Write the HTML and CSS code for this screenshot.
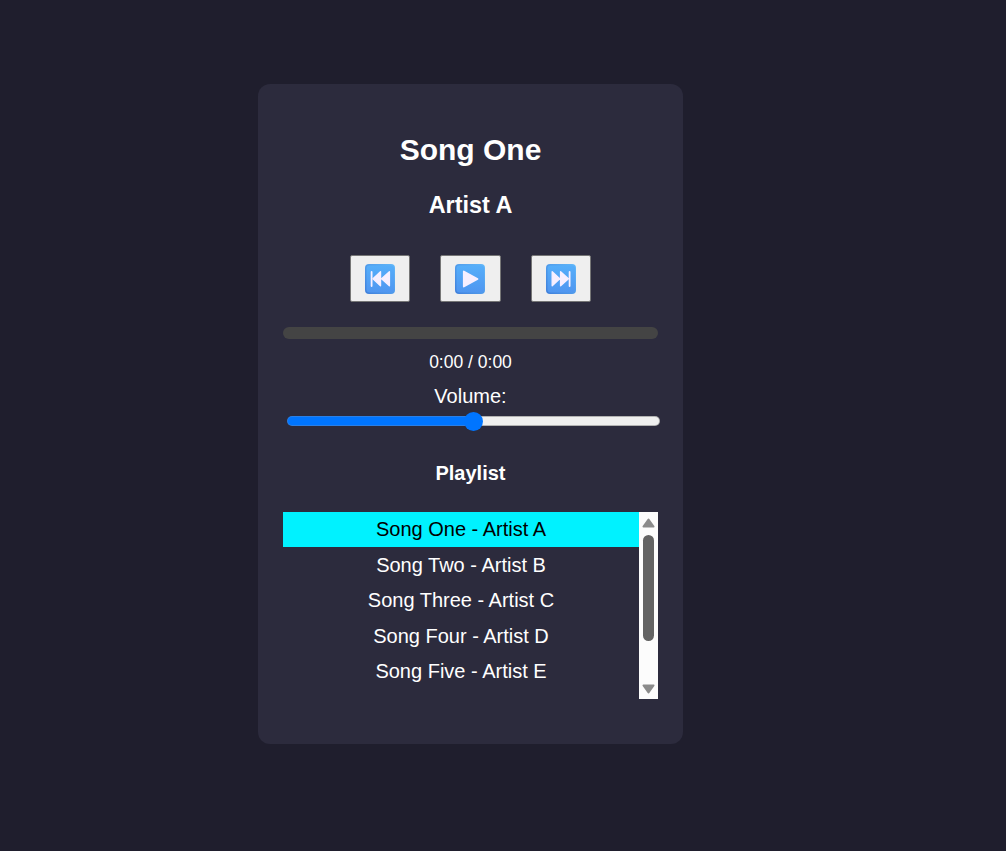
FILE: index.html
```html
<!DOCTYPE html>
<html lang="en">
<head>
<meta charset="utf-8">
<title>Music Player</title>
<link rel="stylesheet" href="styles.css">
</head>
<body>
<svg class="defs" width="0" height="0">
  <defs>
    <linearGradient id="face" x1="0" y1="0" x2="0" y2="1">
      <stop offset="0" stop-color="#55aefa"/><stop offset="1" stop-color="#5096f0"/>
    </linearGradient>
    <linearGradient id="edge" x1="1" y1="0" x2="0" y2="1">
      <stop offset="0" stop-color="#61b8fa"/><stop offset="1" stop-color="#3f7fdb"/>
    </linearGradient>
  </defs>
</svg>
<main class="player">
  <h2 class="title">Song One</h2>
  <h3 class="artist">Artist A</h3>
  <div class="controls">
    <button class="control" aria-label="Previous">
      <svg class="icon" viewBox="0 0 30 30"><rect width="30" height="30" rx="4" fill="url(#edge)"/><rect x="1.5" y="1.5" width="27.5" height="27" rx="3" fill="url(#face)"/><g fill="#f8efff" stroke="#f8efff" stroke-linejoin="round"><path d="M6.6 8v14" stroke-width="1.8" stroke-linecap="round"/><path d="M15.5 7.8v14L8 14.8z M24.4 7.8v14l-7.8-7z" stroke-width="1.4"/></g></svg>
    </button>
    <button class="control" aria-label="Play">
      <svg class="icon" viewBox="0 0 30 30"><rect width="30" height="30" rx="4" fill="url(#edge)"/><rect x="1.5" y="1.5" width="27.5" height="27" rx="3" fill="url(#face)"/><path d="M8.8 7.5v15L22.5 15z" fill="#f8efff" stroke="#f8efff" stroke-width="1.8" stroke-linejoin="round"/></svg>
    </button>
    <button class="control" aria-label="Next">
      <svg class="icon" viewBox="0 0 30 30"><rect width="30" height="30" rx="4" fill="url(#edge)"/><rect x="1.5" y="1.5" width="27.5" height="27" rx="3" fill="url(#face)"/><g fill="#f8efff" stroke="#f8efff" stroke-linejoin="round"><path d="M23.6 8v14" stroke-width="1.8" stroke-linecap="round"/><path d="M6.2 7.8v14l7.5-7z M14.6 7.8v14l7.8-7z" stroke-width="1.4"/></g></svg>
    </button>
  </div>
  <div class="progress"></div>
  <div class="time">0:00 / 0:00</div>
  <div class="label">Volume:</div>
  <div class="volume"><div class="track"></div><div class="thumb"></div></div>
  <h4 class="heading">Playlist</h4>
  <div class="playlist">
    <ul class="songs">
      <li class="song active">Song One - Artist A</li>
      <li class="song">Song Two - Artist B</li>
      <li class="song">Song Three - Artist C</li>
      <li class="song">Song Four - Artist D</li>
      <li class="song">Song Five - Artist E</li>
    </ul>
    <div class="scrollbar">
      <svg class="arrow" viewBox="0 0 13 10"><path d="M6.5 1.5L11.5 8.6H1.5z"/></svg>
      <div class="handle"></div>
      <svg class="arrow down" viewBox="0 0 13 10"><path d="M6.5 8.5L11.5 1.4H1.5z"/></svg>
    </div>
  </div>
</main>
</body>
</html>
```
FILE: styles.css
```css
* { box-sizing: border-box; }
body {
  margin: 0;
  height: 851px;
  overflow: hidden;
  background: #1f1e2d;
  color: #fff;
  font: 20px/23px "Liberation Sans", Arial, sans-serif;
  text-align: center;
}
.defs { display: block; }
.player {
  width: 425px;
  height: 660px;
  margin: 84px 0 0 258px;
  padding: 49px 25px 0;
  background: #2c2b3d;
  border-radius: 12px;
}
.title { margin: 0 0 25px; font-size: 30px; line-height: 34px; }
.artist { margin: 0 0 36px; font-size: 23.4px; line-height: 27px; }
.controls { display: flex; justify-content: center; gap: 30px; height: 47px; }
.control {
  display: flex;
  align-items: center;
  justify-content: center;
  width: 60.4px;
  padding: 0;
  background: #efefef;
  border: 1px solid #767676;
  border-radius: 2px;
}
.icon { width: 30px; height: 30px; }
.progress { height: 12px; margin-top: 25px; background: #444; border-radius: 6px; }
.time { margin-top: 13px; font-size: 17.5px; line-height: 20px; }
.label { margin-top: 13px; }
.volume { display: flex; align-items: center; position: relative; width: 373px; height: 20px; margin: 3px 0 0 4px; }
.track {
  width: 100%;
  height: 10px;
  border: 1px solid transparent;
  border-radius: 5px;
  background:
    linear-gradient(90deg, #0075ff 50%, #efefef 50%) padding-box,
    linear-gradient(90deg, #2a7fe6 50%, #b2b2b2 50%) border-box;
}
.thumb { position: absolute; left: 176.5px; top: 0.5px; width: 19px; height: 19px; border-radius: 50%; background: #0075ff; }
.heading { margin: 31px 0 27px; font-size: 20px; line-height: 23px; }
.playlist { display: flex; height: 187px; }
.songs { flex: 1; margin: 0; padding: 0; list-style: none; }
.song { height: 35.5px; padding-top: 6px; }
.active { height: 35px; margin-bottom: 0.5px; background: #00f2ff; color: #000; }
.scrollbar {
  display: flex;
  flex-direction: column;
  align-items: center;
  width: 19px;
  padding: 6px 0 5px;
  background: #fcfcfc;
}
.arrow { width: 13px; height: 10px; fill: #8b8b8b; stroke: #8b8b8b; stroke-width: 2; stroke-linejoin: round; }
.handle { width: 11px; height: 106px; margin-top: 7px; border-radius: 6px; background: #636363; }
.down { margin-top: auto; }
```
